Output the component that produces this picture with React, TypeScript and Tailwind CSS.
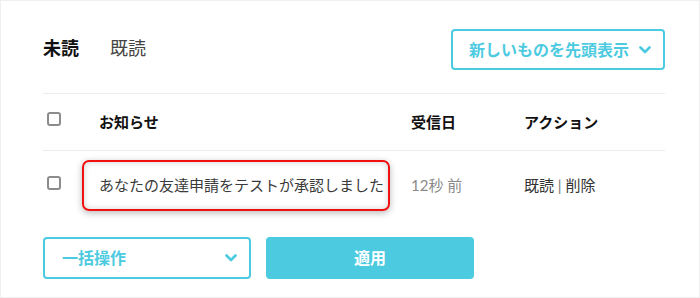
const jp = "font-['Lato','Noto_Sans_CJK_JP',sans-serif]";

function Chevron({ className }: { className?: string }) {
  return (
    <svg viewBox="0 0 12 8" className={className} fill="none">
      <path d="M1.5 1.5 6 6l4.5-4.5" stroke="currentColor" strokeWidth="2.6" strokeLinecap="round" strokeLinejoin="round" />
    </svg>
  );
}

function Checkbox() {
  return <span className="block h-[14px] w-[14px] rounded-[3px] border-2 border-[#8c8c8c] bg-white" />;
}

export default function App() {
  return (
    <div className={`h-[298px] w-[700px] border border-[#efefef] bg-white ${jp}`}>
      <div className="pl-[42px] pr-[34px]">
        <div className="flex h-[92px] items-start justify-between pt-[28px]">
          <div className="flex items-center gap-[31px] pt-[7px] text-[18px] leading-[24px]">
            <span className="font-bold text-[#111]">未読</span>
            <span className="text-[#444]">既読</span>
          </div>
          <button className="flex h-[41px] w-[214px] items-center justify-between rounded-[4px] border-2 border-[#4ccadf] pl-[16px] pr-[12px] text-[16px] font-bold text-[#4ccadf]">
            <span>新しいものを先頭表示</span>
            <Chevron className="h-[8px] w-[12px]" />
          </button>
        </div>

        <div className="flex h-[58px] items-center border-y border-[#ececec] text-[15px] font-bold text-[#111]">
          <div className="w-[56px] pb-[6px] pl-[4px]">
            <Checkbox />
          </div>
          <div className="w-[312px]">お知らせ</div>
          <div className="w-[113px]">受信日</div>
          <div>アクション</div>
        </div>

        <div className="flex h-[72px] items-center pb-[4px] text-[15px]">
          <div className="w-[39px] pb-[5px] pl-[4px]">
            <Checkbox />
          </div>
          <div className="w-[329px]">
            <div className="flex h-[51px] w-[308px] items-center rounded-[7px] border-2 border-[#f01010] pl-[15px] text-[#3a3a3a] shadow-[0_2px_7px_rgba(0,0,0,0.28),inset_0_0_6px_rgba(0,0,0,0.18)]">
              あなたの友達申請をテストが承認しました
            </div>
          </div>
          <div className="w-[113px] text-[#8a8a8a]">12秒 前</div>
          <div className="text-[#333]">
            既読 <span className="text-[#777]">|</span> 削除
          </div>
        </div>

        <div className="mt-[14px] flex gap-[15px]">
          <button className="flex h-[42px] w-[208px] items-center justify-between rounded-[4px] border-2 border-[#4ccadf] pl-[17px] pr-[12px] text-[16px] font-bold text-[#4ccadf]">
            <span>一括操作</span>
            <Chevron className="h-[8px] w-[12px]" />
          </button>
          <button className="flex h-[42px] w-[208px] items-center justify-center rounded-[4px] bg-[#4ccadf] text-[16px] font-bold text-white">
            適用
          </button>
        </div>
      </div>
    </div>
  );
}
